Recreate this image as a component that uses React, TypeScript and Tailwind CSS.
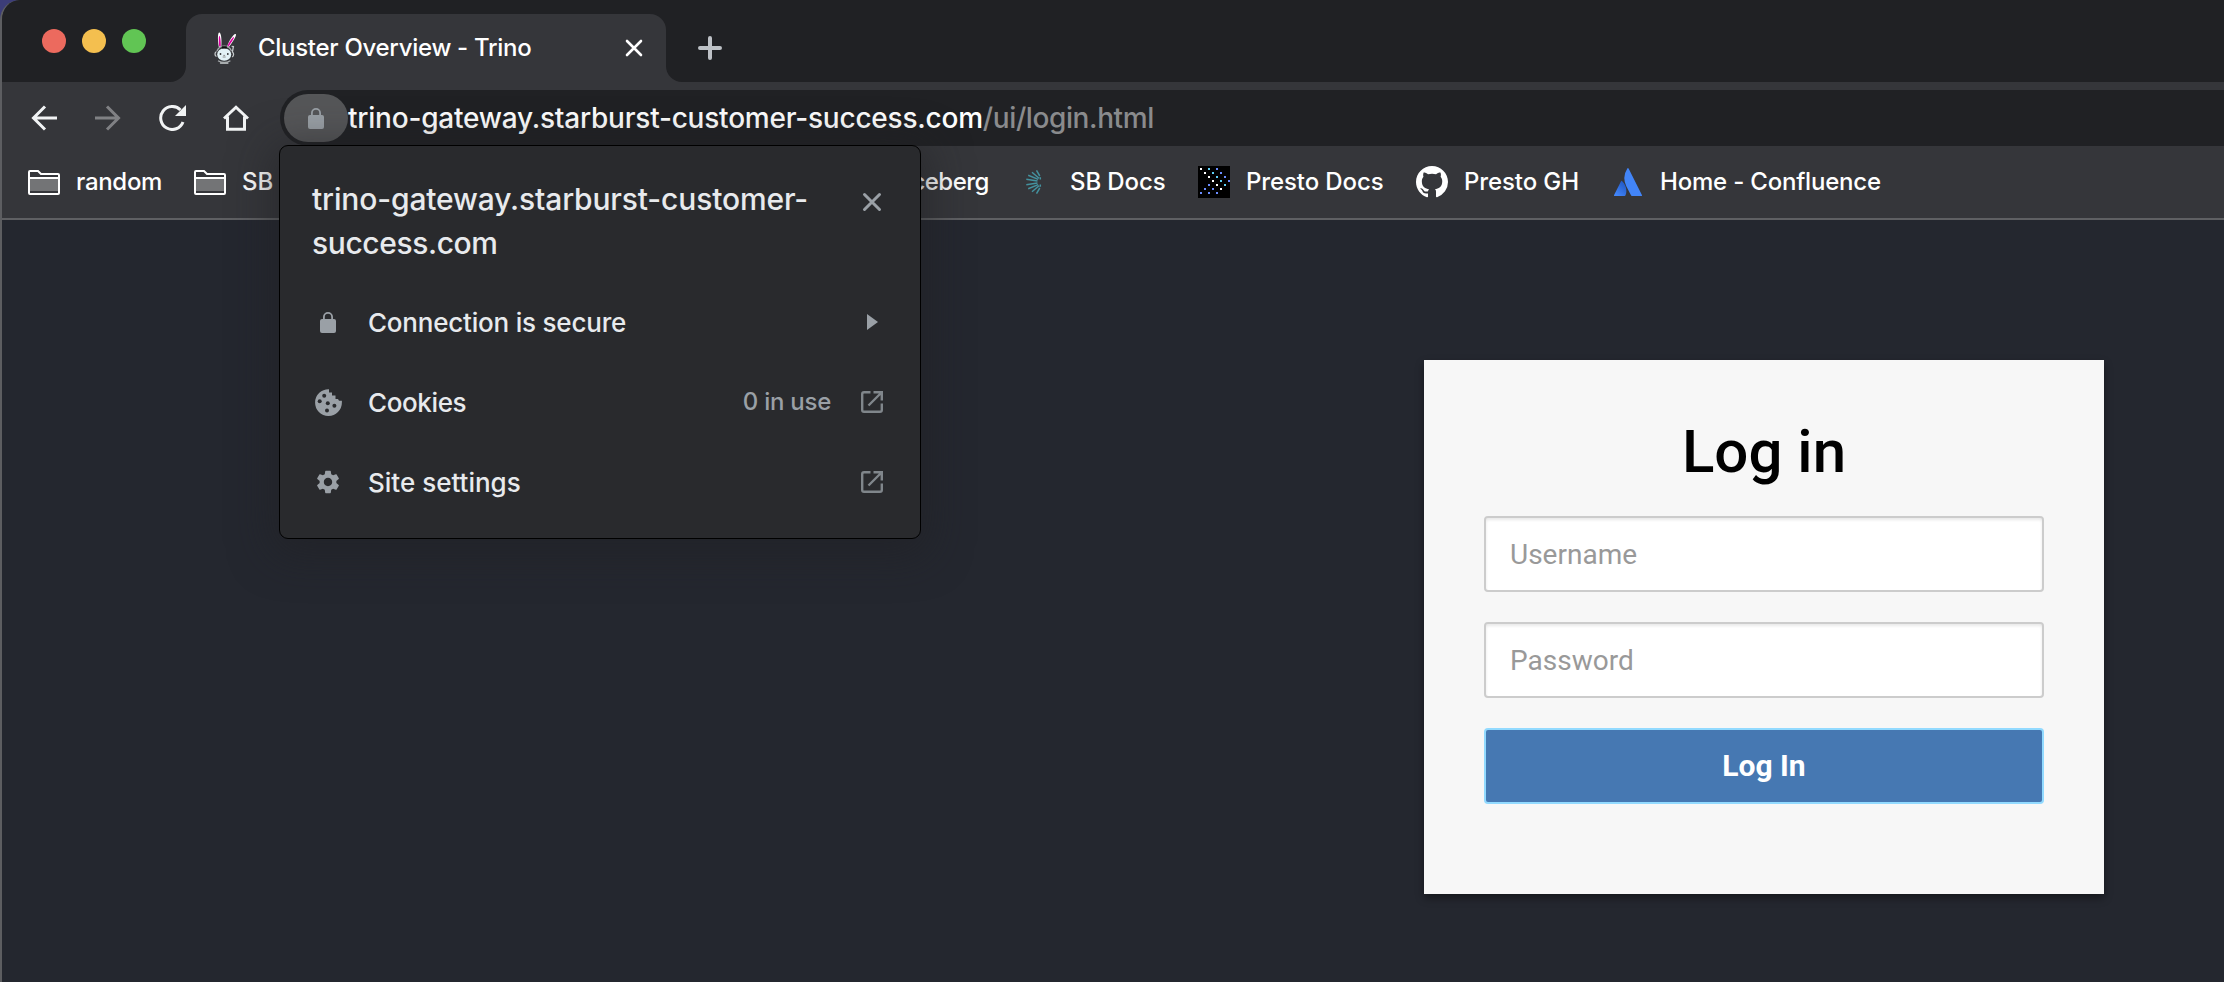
import type { ReactNode } from "react";

function Folder() {
  return (
    <svg width="32" height="25" viewBox="0 0 32 25" fill="none">
      <path d="M2 9H30V21H2z" fill="#737476" />
      <path d="M1 2a1 1 0 0 1 1-1h8l3 3h17a1 1 0 0 1 1 1v18a1 1 0 0 1-1 1H2a1 1 0 0 1-1-1z M1 8h30" stroke="#fff" strokeWidth="2" />
    </svg>
  );
}

function Lock() {
  return (
    <svg width="16" height="21" viewBox="0 0 16 21" fill="none">
      <path d="M3.9 8V5a4.1 4.1 0 0 1 8.2 0v3" stroke="#9aa0a6" strokeWidth="1.8" />
      <rect y="7" width="16" height="14" rx="2" fill="#9aa0a6" />
    </svg>
  );
}

function OpenIcon() {
  return (
    <svg width="22" height="22" viewBox="0 0 22 22" fill="none" stroke="#80868b" strokeWidth="2.4">
      <path d="M9.5 1.2H3A1.800 1.800 0 0 0 1.200 3v16A1.800 1.800 0 0 0 3 20.800h16a1.800 1.800 0 0 0 1.800-1.800v-6.500" />
      <path d="M12.500 1.200h8.300v8.300M20.500 1.500 7.500 14.500" />
    </svg>
  );
}

function Bunny() {
  return (
    <svg width="24" height="32" viewBox="0 0 24 32" fill="none">
      <path d="M4.800 15C3.600 8 3.600.5 5.300.5S8 7 7.300 15zM13 15C14.500 9 20 1 21.700 2S18 11 14.500 15.500z" fill="#fff" />
      <path d="M5.200 14.500C4.600 8 4.800 4 5.400 3.800S7 9 6.800 14.500zM13.300 14.500C15 9.500 19.300 4.500 20 5S17 11 14.200 15z" fill="#dd00a1" />
      <path d="M3 19A7.800 7.800 0 0 1 17.500 19" stroke="#a5a8ab" strokeWidth="1.400" />
      <ellipse cx="10.200" cy="22.500" rx="7" ry="6.200" fill="#e2f1f5" />
      <path d="M7.800 14.300h5v2.200h-5z" fill="#0c0c0d" />
      <path d="M2.500 19.500c-2 .8-2 4.200 0 5M18.200 25c1.800-.8 1.800-4 .2-5l1-5.500-1.800-.2" stroke="#c5c9cb" strokeWidth="1.300" />
      <path d="M4 28.700q6.200 3.600 12.400 0M6 31q4.200 1 8.400 0" stroke="#a8acae" strokeWidth="1.300" />
      <circle cx="6.500" cy="22" r=".9" fill="#333" />
      <circle cx="13.800" cy="22" r=".9" fill="#333" />
      <path d="M9.300 23.400h1.800M8.700 25h3" stroke="#777" strokeWidth=".8" />
    </svg>
  );
}

function Burst() {
  return (
    <svg width="16" height="24" viewBox="0 0 16 24" fill="none" stroke="#44929f" strokeWidth="1.500">
      <path d="M13.800 6 10.500.4M13 8.200 6 2.200M12.200 9.400 2.200 5.200M11.500 10.900 .3 9.200M11.500 13.100.3 14.800M12.200 14.600 2.200 18.800M13 15.800 6 21.800M13.800 18l-3.300 5.600M14.300 9.500V7.200M14.300 14.500v2.300" />
    </svg>
  );
}

const dots: [number, number, string][] = [
  [2, 2, "#fff"], [10, 2, "#5fd0f5"], [18, 2, "#6a8cff"],
  [6, 6, "#fff"], [14, 6, "#5fd0f5"], [22, 6, "#6a8cff"],
  [10, 10, "#fff"], [18, 10, "#5fd0f5"], [26, 10, "#6a8cff"],
  [14, 14, "#fff"], [22, 14, "#5fd0f5"], [30, 14, "#6a8cff"],
  [10, 18, "#6a8cff"], [18, 18, "#fff"], [26, 18, "#5fd0f5"],
  [6, 22, "#6a8cff"], [14, 22, "#6a8cff"], [22, 22, "#fff"],
  [2, 26, "#6a8cff"], [10, 26, "#6a8cff"], [18, 26, "#6a8cff"],
];

function PrestoDots() {
  return (
    <svg width="32" height="32" viewBox="0 0 32 32">
      <rect width="32" height="32" fill="#000" />
      {dots.map(([x, y, c]) => (
        <rect key={`${x}-${y}`} x={x} y={y} width="2" height="2" fill={c} />
      ))}
    </svg>
  );
}

function GitHub() {
  return (
    <svg width="32" height="32" viewBox="0 0 16 16" fill="#fff">
      <path d="M8 0C3.580 0 0 3.580 0 8c0 3.540 2.290 6.530 5.470 7.590.4.070.55-.17.55-.38 0-.19-.01-.82-.01-1.490-2.010.37-2.530-.49-2.690-.94-.09-.23-.48-.94-.82-1.130-.28-.15-.68-.52-.01-.53.63-.01 1.080.58 1.230.82.72 1.210 1.870.87 2.330.66.07-.52.28-.87.51-1.070-1.780-.2-3.640-.89-3.640-3.950 0-.87.31-1.590.82-2.150-.08-.2-.36-1.020.08-2.120 0 0 .67-.21 2.200.82.64-.18 1.320-.27 2-.27s1.360.09 2 .27c1.530-1.040 2.200-.82 2.200-.82.44 1.100.16 1.920.08 2.120.51.56.82 1.270.82 2.150 0 3.070-1.870 3.750-3.650 3.950.29.25.54.73.54 1.480 0 1.070-.01 1.930-.01 2.200 0 .21.15.46.55.38A8.010 8.010 0 0 0 16 8c0-4.420-3.580-8-8-8" />
    </svg>
  );
}

function Atlassian() {
  return (
    <svg width="28" height="28" viewBox="0 0 28 28">
      <defs>
        <linearGradient id="atl" x1="0.9" y1="0.1" x2="0.3" y2="1">
          <stop offset="0" stopColor="#1f57c4" />
          <stop offset="1" stopColor="#4285f8" />
        </linearGradient>
      </defs>
      <path d="M8.200 13.200a.8.8 0 0 0-1.300.2L.1 27a.7.7 0 0 0 .6 1h10a.8.8 0 0 0 .7-.4c2-4.300.9-10.700-3.200-14.400z" fill="url(#atl)" />
      <path d="M13.300.5a18 18 0 0 0-1 17.700l4.800 9.400a.8.8 0 0 0 .7.4h9.500a.7.7 0 0 0 .6-1L14.600.5a.7.7 0 0 0-1.300 0z" fill="#4285f8" />
    </svg>
  );
}

function Bookmark({ icon, gap, children }: { icon: ReactNode; gap: string; children: ReactNode }) {
  return (
    <div className={`flex shrink-0 items-center ${gap}`}>
      {icon}
      {children}
    </div>
  );
}

function TabStrip() {
  return (
    <div className="flex h-[82px] items-end bg-[#202124]">
      <div className="flex h-full w-[168px] items-center gap-4 pl-10">
        <span className="size-6 rounded-full bg-[#ec6a5e]" />
        <span className="size-6 rounded-full bg-[#f4bf4f]" />
        <span className="size-6 rounded-full bg-[#61c554]" />
      </div>
      <svg width="16" height="16" className="shrink-0"><path d="M16 0v16H0A16 16 0 0 0 16 0z" fill="#35363a" /></svg>
      <div className="flex h-[68px] w-[480px] items-center rounded-t-[16px] bg-[#35363a] pl-7">
        <Bunny />
        <span className="ml-5 w-[360px] text-[24px] leading-8 tracking-[-0.29px] text-white">Cluster Overview - Trino</span>
        <svg width="18" height="18" viewBox="0 0 18 18" className="ml-[7px] shrink-0" stroke="#fff" strokeWidth="2.600" strokeLinecap="round"><path d="m2 2 14 14M16 2 2 16" /></svg>
      </div>
      <svg width="16" height="16" className="shrink-0"><path d="M0 0v16h16A16 16 0 0 1 0 0z" fill="#35363a" /></svg>
      <svg width="24" height="24" viewBox="0 0 24 24" className="mb-[22px] ml-4" stroke="#bdc1c6" strokeWidth="4" strokeLinecap="round"><path d="M12 2v20M2 12h20" /></svg>
    </div>
  );
}

function Toolbar() {
  return (
    <div className="flex h-16 items-center pt-2">
      <div className="flex w-[278px] items-center pl-[29px]">
        <svg width="26" height="26" viewBox="0 0 26 26" fill="none" stroke="#f1f3f4" strokeWidth="3"><path d="M26 13H2.500M14 1.500 2.500 13 14 24.500" /></svg>
        <svg className="ml-[38px]" width="26" height="26" viewBox="0 0 26 26" fill="none" stroke="#808184" strokeWidth="3"><path d="M0 13h23.500M12 1.500 23.500 13 12 24.500" /></svg>
        <svg className="ml-[38px]" width="27" height="26" viewBox="0 0 27 26" fill="none"><path d="M21.500 5A11.500 11.500 0 1 0 24 17" stroke="#f1f3f4" strokeWidth="3" /><path d="M27 0v11H16z" fill="#f1f3f4" /></svg>
        <svg className="ml-[37px]" width="26" height="26" viewBox="0 0 26 26" fill="none" stroke="#f1f3f4" strokeWidth="3"><path d="M1 13.500 13 2.200l12 11.300M4.500 11.500v12.800h17V11.500" /></svg>
      </div>
      <div className="flex h-14 flex-1 items-center rounded-l-full bg-[#202124] pl-1">
        <div className="flex h-12 w-16 items-center justify-center rounded-full bg-[#555658]"><Lock /></div>
        <span className="whitespace-nowrap text-[28px] leading-9 tracking-[-0.22px] text-white">trino-gateway.starburst-customer-success.com</span>
        <span className="whitespace-nowrap text-[28px] leading-9 tracking-[-0.4px] text-[#8a8b8d]">/ui/login.html</span>
      </div>
    </div>
  );
}

function BookmarksBar() {
  return (
    <div className="flex h-[74px] items-center border-b-2 border-[#5f6063] pl-[26px] text-[24px] leading-8 text-white">
      <Bookmark icon={<Folder />} gap="gap-4"><span className="w-[102px] tracking-[-0.3px]">random</span></Bookmark>
      <span className="w-4" />
      <Bookmark icon={<Folder />} gap="gap-4"><span className="w-8">SB</span></Bookmark>
      <div className="flex w-[715px] justify-end"><span className="tracking-[-0.5px]">Iceberg</span></div>
      <div className="ml-[37px] flex w-[172px]"><Bookmark icon={<Burst />} gap="gap-[28px]"><span className="tracking-[-0.1px]">SB Docs</span></Bookmark></div>
      <div className="flex w-[218px]"><Bookmark icon={<PrestoDots />} gap="gap-4"><span className="tracking-[-0.1px]">Presto Docs</span></Bookmark></div>
      <div className="flex w-[198px]"><Bookmark icon={<GitHub />} gap="gap-4"><span className="tracking-[-0.1px]">Presto GH</span></Bookmark></div>
      <Bookmark icon={<Atlassian />} gap="gap-[18px]"><span className="tracking-[-0.2px]">Home - Confluence</span></Bookmark>
    </div>
  );
}

function SiteInfo() {
  return (
    <div className="absolute left-[279px] top-[145px] h-[394px] w-[642px] rounded-[9px] border border-black bg-[#292a2d] pl-[32px] font-medium text-[#e8eaed] shadow-[0_8px_40px_8px_rgba(32,33,36,0.55)]">
      <div className="flex pt-[31px]">
        <div className="w-[550px] text-[30px] leading-[44px]">
          <span className="tracking-[-0.14px]">trino-gateway.starburst-customer-</span><br /><span className="tracking-[-0.4px]">success.com</span>
        </div>
        <svg width="20" height="20" viewBox="0 0 20 20" className="mt-[15px]" stroke="#9aa0a6" strokeWidth="3" strokeLinecap="round"><path d="m2.500 2.500 15 15M17.500 2.500l-15 15" /></svg>
      </div>
      <div className="mt-[17px] flex h-20 items-center text-[26px] leading-9">
        <div className="flex w-[56px] pl-[8px]"><Lock /></div>
        <span className="flex-1 pt-0.5 tracking-[-0.21px]">Connection is secure</span>
        <svg width="11" height="16" className="mr-[42px]"><path d="M0 0v16l11-8z" fill="#9aa0a6" /></svg>
      </div>
      <div className="flex h-20 items-center text-[26px] leading-9">
        <div className="flex w-[56px] pl-[3px]">
          <svg width="27" height="27" viewBox="0 0 27 27">
            <path d="M14 .2v3.300h3v3h3.500v3.500h2.500l1 1.800h2.900V13.500A13.400 13.400 0 1 1 14 .2z" fill="#9aa0a6" />
            <g fill="#292a2d"><circle cx="9.200" cy="6.800" r="2" /><circle cx="4.700" cy="12.200" r="2" /><circle cx="12.800" cy="14.200" r="2" /><circle cx="19.400" cy="16.800" r="2" /><circle cx="12" cy="21.400" r="2" /></g>
          </svg>
        </div>
        <span className="flex-1 pt-0.5 tracking-[-0.38px]">Cookies</span>
        <span className="text-[24px] tracking-[-0.25px] text-[#9aa0a6]">0 in use</span>
        <div className="ml-[30px] mr-[37px]"><OpenIcon /></div>
      </div>
      <div className="flex h-20 items-center text-[26px] leading-9">
        <div className="flex w-[56px] pl-[2px]">
          <svg width="28" height="28" viewBox="0 0 24 24" fill="#9aa0a6"><path d="M19.140 12.940c.04-.3.060-.61.060-.94 0-.32-.02-.64-.07-.94l2.030-1.580c.18-.14.23-.41.12-.61l-1.920-3.320c-.12-.22-.37-.29-.59-.22l-2.390.96c-.5-.38-1.030-.7-1.620-.94l-.36-2.540c-.04-.24-.24-.41-.48-.41h-3.840c-.24 0-.43.17-.47.41l-.36 2.540c-.59.24-1.130.57-1.620.94l-2.390-.96c-.22-.08-.47 0-.59.22L2.740 8.870c-.12.21-.08.47.12.61l2.030 1.580c-.05.3-.09.63-.09.94s.02.64.07.94l-2.030 1.580c-.18.14-.23.41-.12.61l1.920 3.320c.12.22.37.29.59.22l2.390-.96c.5.38 1.030.7 1.620.94l.36 2.540c.05.24.24.41.48.41h3.840c.24 0 .44-.17.47-.41l.36-2.540c.59-.24 1.130-.56 1.620-.94l2.390.96c.22.08.47 0 .59-.22l1.920-3.320c.12-.22.07-.47-.12-.61zM12 15.600c-1.980 0-3.600-1.620-3.600-3.600s1.620-3.600 3.600-3.600 3.600 1.620 3.600 3.600-1.620 3.600-3.600 3.600" /></svg>
        </div>
        <span className="flex-1 pt-0.5">Site settings</span>
        <div className="mr-[37px]"><OpenIcon /></div>
      </div>
    </div>
  );
}

function LoginCard() {
  return (
    <form className="flex h-[534px] w-[680px] flex-col items-center bg-[#f7f7f7] px-[60px] pt-[52px] font-['Roboto',sans-serif] shadow-[0_4px_8px_rgba(0,0,0,0.4)]">
      <h1 className="text-[60px] font-medium leading-[80px] text-black">Log in</h1>
      <div className="mt-6 flex w-full flex-col gap-[30px] text-[28px] font-normal leading-[74px]">
        <div className="h-[76px] rounded-[4px] border-2 border-[#ccc] bg-white pl-6 text-[#999] shadow-[inset_0_2px_3px_rgba(0,0,0,0.09)]">Username</div>
        <div className="h-[76px] rounded-[4px] border-2 border-[#ccc] bg-white pl-6 text-[#999] shadow-[inset_0_2px_3px_rgba(0,0,0,0.09)]">Password</div>
        <button type="button" className="h-[76px] rounded-[4px] border-2 border-[#92daff] bg-[#4678b2] text-[30px] font-bold leading-[72px] text-white">Log In</button>
      </div>
    </form>
  );
}

export default function App() {
  return (
    <div className="h-[982px] w-[2224px] overflow-hidden bg-[#3c3d78] font-['Inter',sans-serif] font-medium">
      <div className="relative flex h-full flex-col overflow-hidden rounded-tl-[20px] border-l-2 border-[#5d5e61] bg-[#35363a]">
        <TabStrip />
        <Toolbar />
        <BookmarksBar />
        <main className="flex flex-1 justify-end bg-[#24272f] pr-[120px] pt-[140px]">
          <LoginCard />
        </main>
      </div>
      <SiteInfo />
    </div>
  );
}
